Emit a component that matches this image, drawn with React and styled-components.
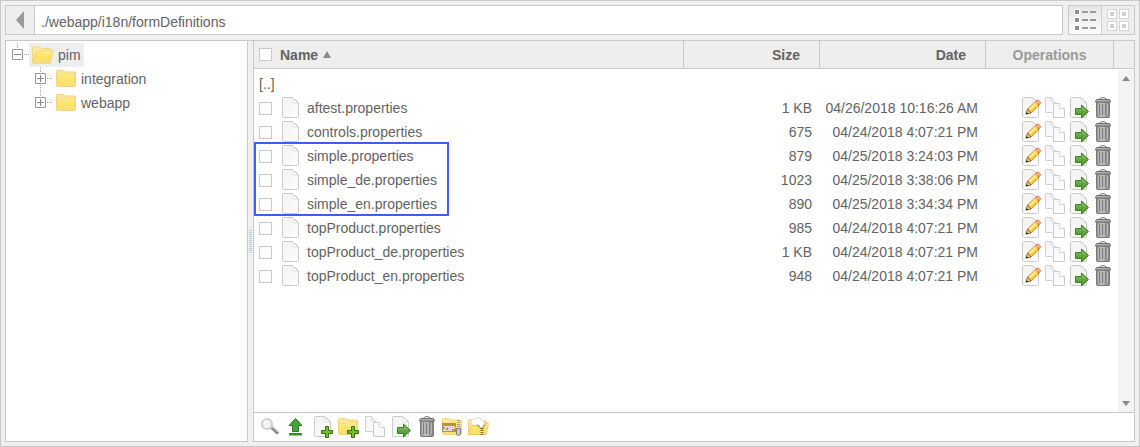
import React, { useState } from "react";
import styled, { createGlobalStyle } from "styled-components";

const GlobalStyle = createGlobalStyle`
  * {
    box-sizing: border-box;
  }
  body {
    margin: 0;
    background: #eeeeee;
    color: #636363;
    font-family: Arial, "Liberation Sans", sans-serif;
    font-size: 14px;
    line-height: 24px;
  }
`

const Manager = styled.main`
  display: flex;
  flex-direction: column;
  gap: 5px;
  min-height: 100vh;
  padding: 4px;
  border: 1px solid #c9c9c9;
  background: #f0f0f0;
`
const TopBar = styled.header`
  display: flex;
  gap: 5px;
  height: 30px;
`
const PathBox = styled.div`
  display: flex;
  flex: 1;
  border: 1px solid #c9c9c9;
  background: #fff;
`
const BackButton = styled.button`
  display: flex;
  align-items: center;
  justify-content: center;
  width: 29px;
  padding: 0;
  border: 0;
  border-right: 1px solid #c9c9c9;
  background: #eeeeee;
`
const PathInput = styled.input`
  flex: 1;
  min-width: 0;
  padding: 4px 6px 0;
  border: 0;
  outline: 0;
  background: none;
  color: inherit;
  font: inherit;
`
const ViewSwitch = styled.div`
  display: flex;
  border: 1px solid #c9c9c9;
`
const ViewButton = styled.button`
  display: flex;
  align-items: center;
  justify-content: center;
  width: ${({ $active }) => ($active ? "33px" : "32px")};
  padding: 0;
  border: 0;
  border-right: ${({ $active }) => ($active ? "1px solid #d0d0d0" : "0")};
  background: ${({ $active }) => ($active ? "linear-gradient(#e6e6e6, #fbfbfb)" : "#eeeeee")};
`

const Panels = styled.div`
  display: flex;
  flex: 1;
`
const TreePanel = styled.nav`
  width: 243px;
  border: 1px solid #c9c9c9;
  background: #fff;
`
const TreeList = styled.ul`
  margin: 0;
  padding: ${({ $nested }) => ($nested ? "0 0 0 23px" : "2px 0 0 6px")};
  list-style: none;
`
const TreeRow = styled.div`
  display: flex;
  align-items: center;
  height: 24px;
`
const TreeLink = styled.a`
  display: flex;
  align-items: center;
  gap: 4px;
  height: 24px;
  padding: 0 3px 0 2px;
  background: ${({ $selected }) => ($selected ? "#eeeeee" : "none")};
  color: inherit;
  text-decoration: none;
`
const Splitter = styled.div`
  display: flex;
  align-items: center;
  justify-content: center;
  width: 5px;
  border-top: 1px solid #c9c9c9;
`
const Grip = styled.span`
  width: 3px;
  height: 24px;
  background: repeating-linear-gradient(#b4cbe0 0 1px, #f0f0f0 1px 2px);
`
const FilePanel = styled.section`
  display: flex;
  flex: 1;
  flex-direction: column;
  min-width: 0;
  border: 1px solid #c9c9c9;
  background: #fff;
`
const ListArea = styled.div`
  position: relative;
  flex: 1;
`
const FileTable = styled.table`
  width: 100%;
  border-collapse: separate;
  border-spacing: 0;
  table-layout: fixed;
`
const HeadCell = styled.th`
  width: ${({ $width }) => $width || "auto"};
  height: 28px;
  padding: ${({ $align }) => ({ right: "0 19px 0 0", center: "0" }[$align] || "0 0 0 5px")};
  border-right: ${({ $last }) => ($last ? "0" : "1px solid #c9c9c9")};
  border-bottom: 1px solid #c9c9c9;
  background: #eeeeee;
  color: ${({ $muted }) => ($muted ? "#999999" : "inherit")};
  text-align: ${({ $align }) => $align || "left"};
`
const SortLabel = styled.div`
  display: flex;
  align-items: center;
  gap: 5px;
`
const SelectAll = styled.label`
  display: flex;
  align-items: center;
`
const Cell = styled.td`
  position: relative;
  height: 24px;
  padding: ${({ $align }) => ($align === "right" ? "0 8px 0 0" : "0 0 0 5px")};
  text-align: ${({ $align }) => $align || "left"};
  white-space: nowrap;
`
const ParentCell = styled.td`
  height: 27px;
  padding: 4px 0 0 5px;
  line-height: 23px;
`
const NameLine = styled.label`
  display: flex;
  align-items: center;
  height: 24px;
`
const Check = styled.input`
  appearance: none;
  width: 13px;
  height: 13px;
  margin: 0 8px 0 0;
  border: 1px solid #c9c9c9;
  background: #fff;

  &:checked {
    background: #8f8f8f;
    box-shadow: inset 0 0 0 2px #fff;
  }
`
const FileName = styled.span`
  padding-left: 5px;
`
const Marker = styled.div`
  position: absolute;
  top: -2px;
  left: 0;
  width: 195px;
  height: 74px;
  border: 2px solid #3f5cfb;
  pointer-events: none;
`
const Operations = styled.div`
  display: flex;
  justify-content: flex-end;
`
const IconButton = styled.button`
  display: flex;
  align-items: center;
  justify-content: center;
  width: ${({ $wide }) => ($wide ? "26px" : "24px")};
  height: 24px;
  padding: 0;
  border: 0;
  background: none;
`
const ScrollTrack = styled.div`
  position: absolute;
  top: 29px;
  right: 0;
  bottom: 0;
  display: flex;
  flex-direction: column;
  align-items: center;
  justify-content: space-between;
  width: 16px;
  padding: 6px 0;
  background: #f3f3f3;
`
const Toolbar = styled.footer`
  display: flex;
  align-items: center;
  height: 29px;
  padding-left: 3px;
  border-top: 1px solid #c9c9c9;
`

const Svg = ({ children, width = 22, height = 22 }) => (
  <svg width={width} height={height} viewBox={`0 0 ${width} ${height}`} fill="none" aria-hidden="true">
    {children}
  </svg>
)

const Defs = styled.svg`
  position: absolute;
`
const Gradients = () => (
  <Defs width="0" height="0" aria-hidden="true">
    <defs>
      <linearGradient id="folder" x1="0" y1="0" x2="0" y2="1">
        <stop offset="0" stopColor="#fdee92" />
        <stop offset="0.6" stopColor="#f9e264" />
        <stop offset="1" stopColor="#f8de78" />
      </linearGradient>
      <linearGradient id="paper" x1="0" y1="0" x2="1" y2="1">
        <stop offset="0" stopColor="#f3f3f3" />
        <stop offset="1" stopColor="#fdfdfd" />
      </linearGradient>
      <linearGradient id="green" x1="0" y1="0" x2="0" y2="1">
        <stop offset="0" stopColor="#8cc66c" />
        <stop offset="1" stopColor="#3d8b22" />
      </linearGradient>
      <linearGradient id="metal" x1="0" y1="0" x2="1" y2="0">
        <stop offset="0" stopColor="#8d8d8d" />
        <stop offset="0.4" stopColor="#c2c2c2" />
        <stop offset="1" stopColor="#808080" />
      </linearGradient>
    </defs>
  </Defs>
)

const Paper = () => (
  <>
    <path d="M4.5 0.5H13.5L19.5 6V19.5Q19.5 20.5 18.5 20.5H4.5Q3.5 20.5 3.5 19.5V1.5Q3.5 0.5 4.5 0.5Z" fill="url(#paper)" stroke="#cbcbcb" />
    <path d="M14 1V5Q14 6 15 6H19" fill="#fff" stroke="#e2e2e2" />
    <path d="M13.5 0.5L19.5 6" stroke="#c4c4c4" />
  </>
)
const Plus = () => (
  <path d="M14.5 10.5H17.5V14.5H21.5V17.5H17.5V21.5H14.5V17.5H10.5V14.5H14.5Z" fill="#76bb2c" stroke="#35700f" />
)
const FolderShape = () => (
  <>
    <path d="M1.5 3.5Q1.5 2.5 2.5 2.5H8.5L10 4H19.5Q20.5 4 20.5 5V17.5Q20.5 18.5 19.5 18.5H2.5Q1.5 18.5 1.5 17.5Z" fill="#fbea94" stroke="#f3d27f" />
    <path d="M2.5 7.5H9L10.5 6H19.5V17.5H2.5Z" fill="url(#folder)" stroke="#f8e17a" />
  </>
)

const FileIcon = () => <Svg><g transform="translate(-1 0)"><Paper /></g></Svg>
const FolderIcon = () => <Svg width={23}><g transform="translate(1 0)"><FolderShape /></g></Svg>
const OpenFolderIcon = () => (
  <Svg width={23}>
    <path d="M1.5 4Q1.5 3 2.5 3H8.5L10 4.5H18.5Q19.5 4.5 19.5 5.5V19H2.5Q1.5 19 1.5 18Z" fill="#fbec9c" stroke="#f3d583" />
    <path d="M5 8H10.5L12 6.5H22.5L19.5 17.5Q19 19 18 19H2.5Q1.5 19 2 17.5Z" fill="url(#folder)" stroke="#f3d27f" />
  </Svg>
)
const EditIcon = () => (
  <Svg>
    <Paper />
    <path d="M8.5 12L16.5 4.5L20 8.5L12 16Z" fill="#f7cf45" stroke="#cc8f2c" />
    <path d="M10.5 12.5L17.5 5.5" stroke="#fff09a" strokeWidth="2" />
    <path d="M16.5 4.5L18 3.5Q20 3 21.5 5Q21.5 6.5 20 8.5Z" fill="#f3b285" stroke="#d98048" />
    <path d="M7 17L8.5 12L12 16Z" fill="#e9c18a" stroke="#a06c32" />
    <path d="M6.5 17.5L7.5 15L9.5 16.7Z" fill="#333" />
  </Svg>
)
const CopyIcon = () => (
  <Svg>
    <path d="M2.5 0.5H8.5L12.5 5.5V15.5H2.5Z" fill="url(#paper)" stroke="#d2d2d2" />
    <path d="M8.5 0.5V5.5H12.5" stroke="#dddddd" />
    <path d="M10.5 6.5H16.5L21.5 11.5V20.5H10.5Z" fill="#fafafa" stroke="#cacaca" />
    <path d="M16.5 6.5V11.5H21.5" fill="#fff" stroke="#d8d8d8" />
  </Svg>
)
const MoveIcon = () => (
  <Svg>
    <Paper />
    <path d="M8.5 11.5H14.5V8L21.5 14.5L14.5 21V17.5H8.5Z" fill="url(#green)" stroke="#3b8124" />
  </Svg>
)
const TrashIcon = () => (
  <Svg>
    <path d="M8.5 2.5Q9 0.5 12 0.5Q15 0.5 15.5 2.5" stroke="#777" />
    <path d="M5.5 5H18.5V19.5Q18.5 20.5 17.5 20.5H6.5Q5.5 20.5 5.5 19.5Z" fill="url(#metal)" stroke="#7a7a7a" />
    <path d="M6 2.5H18Q19.5 3 19.5 5H4.5Q4.5 3 6 2.5Z" fill="#b0b0b0" stroke="#6c6c6c" />
    <path d="M8.5 7V18M11.5 7V18M14.5 7V18" stroke="#7c7c7c" />
    <path d="M7.5 7V18M10.5 7V18M13.5 7V18M16.5 7V18" stroke="#b9b9b9" />
  </Svg>
)
const SearchIcon = () => (
  <Svg>
    <path d="M12.5 11.5L19 17.5" stroke="#777" strokeWidth="3" />
    <path d="M13 11.5L18.5 16.5" stroke="#c9c9c9" />
    <circle cx="8" cy="8" r="5" fill="#f1f3f2" stroke="#cfcfcf" strokeWidth="2" />
    <path d="M5.5 8Q5.5 5.5 8 5.5" stroke="#fff" strokeWidth="2" />
  </Svg>
)
const UploadIcon = () => (
  <Svg>
    <path d="M10.5 2.5L17 9.5H13.5V15.5H7.5V9.5H4Z" fill="#46a338" stroke="#2a7f20" />
    <path d="M4.5 17.5H16.5V19H4.5Z" fill="#4fa33f" stroke="#2f8525" />
  </Svg>
)
const NewFileIcon = () => <Svg><Paper /><Plus /></Svg>
const NewFolderIcon = () => <Svg><FolderShape /><Plus /></Svg>
const ZipIcon = () => (
  <Svg>
    <FolderShape />
    <path d="M1 7H15V16H1Z" fill="#b8923a" />
    <text x="2" y="15" fill="#fff" fontFamily="Liberation Sans, sans-serif" fontSize="8" fontWeight="bold">ZIP</text>
    <path d="M17.5 4V13" stroke="#999" strokeWidth="3" strokeDasharray="1 1" />
    <path d="M15.5 12.5H19.5V18.5Q17.5 20.5 15.5 18.5Z" fill="#c4c8d0" stroke="#7d8087" />
  </Svg>
)
const UnzipIcon = () => (
  <Svg>
    <path d="M1.5 4.5Q1.5 3.5 2.5 3.5H6L8 5H19.5V18H1.5Z" fill="#fbec9c" stroke="#f0cc70" />
    <path d="M5.5 10L3.5 4L12 1.5L17.5 5.5V9L15 14L10.5 9Z" fill="#fff" stroke="#d4d4d4" />
    <path d="M4 9.5H10.5L15 13.5L18 7.5H21.5L19 18.5H1.5Z" fill="url(#folder)" stroke="#efc968" />
    <path d="M10.5 9L15 13L18.5 8" stroke="#a08a50" strokeWidth="2" strokeDasharray="1 1" />
    <path d="M15 12V20" stroke="#85754a" strokeWidth="3" strokeDasharray="1 1" />
  </Svg>
)
const ListViewIcon = () => (
  <Svg>
    {[0, 8, 16].map((y) => (
      <g key={y}>
        <rect y={y} width="6" height="6" fill="#fff" />
        <rect x="1" y={y + 1} width="4" height="4" fill="#8f8f8f" />
        <path d={`M8 ${y + 3}H14M16 ${y + 3}H22`} stroke="#999" strokeWidth="2" />
      </g>
    ))}
  </Svg>
)
const GridViewIcon = () => (
  <Svg>
    {[[0, 0], [12, 0], [0, 12], [12, 12]].map(([x, y]) => (
      <g key={`${x}-${y}`}>
        <rect x={x + 0.5} y={y + 0.5} width="9" height="9" fill="#fff" stroke="#d6d6d6" />
        <rect x={x + 3} y={y + 3} width="4" height="4" fill="#cfcfcf" />
      </g>
    ))}
  </Svg>
)
const SortIcon = () => <Svg width={8} height={7}><path d="M0 7H8L4 0Z" fill="#8c8c8c" /></Svg>
const ArrowIcon = ({ down }) => (
  <Svg width={8} height={5}>
    <path d={down ? "M0 0H8L4 5Z" : "M0 5H8L4 0Z"} fill="#888" />
  </Svg>
)
const ToggleIcon = ({ open, last }) => (
  <Svg width={17} height={24}>
    <path d={open || last ? "M5.5 0V7" : "M5.5 0V7M5.5 18V24"} stroke="#aaa" strokeDasharray="1 1" />
    <path d="M0.5 6.5H10.5V16.5H0.5Z" fill="#fff" stroke="#999" />
    <path d={open ? "M2 11.5H9" : "M2 11.5H9M5.5 8V15"} stroke="#888" />
    <path d="M12 11.5H17" stroke="#aaa" strokeDasharray="1 1" />
  </Svg>
)

const FILES = [
  { name: "aftest.properties", size: "1 KB", date: "04/26/2018 10:16:26 AM" },
  { name: "controls.properties", size: "675", date: "04/24/2018 4:07:21 PM" },
  { name: "simple.properties", size: "879", date: "04/25/2018 3:24:03 PM", marked: true },
  { name: "simple_de.properties", size: "1023", date: "04/25/2018 3:38:06 PM" },
  { name: "simple_en.properties", size: "890", date: "04/25/2018 3:34:34 PM" },
  { name: "topProduct.properties", size: "985", date: "04/24/2018 4:07:21 PM" },
  { name: "topProduct_de.properties", size: "1 KB", date: "04/24/2018 4:07:21 PM" },
  { name: "topProduct_en.properties", size: "948", date: "04/24/2018 4:07:21 PM" },
]

const OPERATIONS = [
  ["Edit", EditIcon],
  ["Copy", CopyIcon],
  ["Move", MoveIcon],
  ["Delete", TrashIcon],
]
const TOOLS = [
  ["Search", SearchIcon],
  ["Upload", UploadIcon],
  ["New file", NewFileIcon],
  ["New folder", NewFolderIcon],
  ["Copy", CopyIcon],
  ["Move", MoveIcon],
  ["Delete", TrashIcon],
  ["Zip", ZipIcon],
  ["Unzip", UnzipIcon],
]
const SUBFOLDERS = ["integration", "webapp"]

const App = () => {
  const [path, setPath] = useState("./webapp/i18n/formDefinitions")
  const [view, setView] = useState("list")

  return (
    <Manager>
      <GlobalStyle />
      <Gradients />
      <TopBar>
        <PathBox>
          <BackButton aria-label="Back"><Svg width={10} height={18}><path d="M9 0V18L1 9Z" fill="#999" /></Svg></BackButton>
          <PathInput aria-label="Path" value={path} onChange={(e) => setPath(e.target.value)} />
        </PathBox>
        <ViewSwitch>
          <ViewButton aria-label="List view" $active={view === "list"} onClick={() => setView("list")}><ListViewIcon /></ViewButton>
          <ViewButton aria-label="Grid view" $active={view === "grid"} onClick={() => setView("grid")}><GridViewIcon /></ViewButton>
        </ViewSwitch>
      </TopBar>
      <Panels>
        <TreePanel>
          <TreeList>
            <li>
              <TreeRow><ToggleIcon open /><TreeLink href="#pim" $selected><OpenFolderIcon />pim</TreeLink></TreeRow>
              <TreeList $nested>
                {SUBFOLDERS.map((name, i) => (
                  <li key={name}>
                    <TreeRow>
                      <ToggleIcon last={i === SUBFOLDERS.length - 1} />
                      <TreeLink href={`#${name}`}><FolderIcon />{name}</TreeLink>
                    </TreeRow>
                  </li>
                ))}
              </TreeList>
            </li>
          </TreeList>
        </TreePanel>
        <Splitter><Grip /></Splitter>
        <FilePanel>
          <ListArea>
            <FileTable>
              <thead>
                <tr>
                  <HeadCell>
                    <SortLabel><SelectAll><Check type="checkbox" />Name</SelectAll><SortIcon /></SortLabel>
                  </HeadCell>
                  <HeadCell $width="136px" $align="right">Size</HeadCell>
                  <HeadCell $width="166px" $align="right">Date</HeadCell>
                  <HeadCell $width="128px" $align="center" $muted>Operations</HeadCell>
                  <HeadCell $width="20px" $last />
                </tr>
              </thead>
              <tbody>
                <tr><ParentCell colSpan="5">[..]</ParentCell></tr>
                {FILES.map(({ name, size, date, marked }) => (
                  <tr key={name}>
                    <Cell>
                      <NameLine><Check type="checkbox" /><FileIcon /><FileName>{name}</FileName></NameLine>
                      {marked && <Marker />}
                    </Cell>
                    <Cell $align="right">{size}</Cell>
                    <Cell $align="right">{date}</Cell>
                    <Cell>
                      <Operations>
                        {OPERATIONS.map(([label, Icon]) => <IconButton key={label} aria-label={`${label} ${name}`}><Icon /></IconButton>)}
                      </Operations>
                    </Cell>
                    <td />
                  </tr>
                ))}
              </tbody>
            </FileTable>
            <ScrollTrack><ArrowIcon /><ArrowIcon down /></ScrollTrack>
          </ListArea>
          <Toolbar>
            {TOOLS.map(([label, Icon]) => <IconButton key={label} aria-label={label} $wide><Icon /></IconButton>)}
          </Toolbar>
        </FilePanel>
      </Panels>
    </Manager>
  )
}

export default App
